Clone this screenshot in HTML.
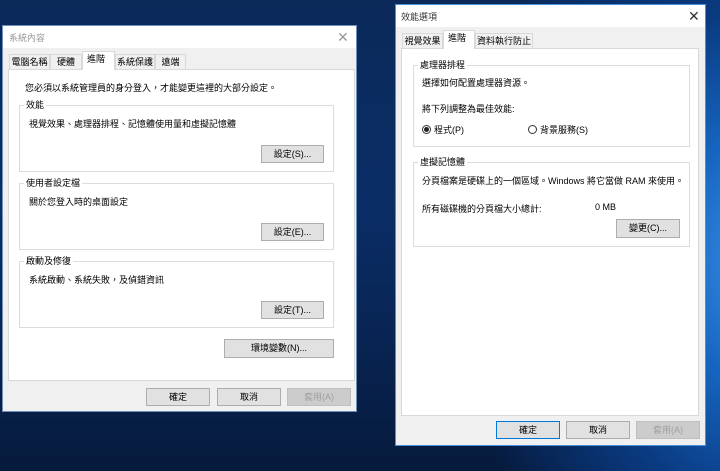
<!DOCTYPE html>
<html><head><meta charset="utf-8"><style>
*{margin:0;padding:0;box-sizing:border-box}
body{width:720px;height:471px;overflow:hidden;position:relative;font-family:"Liberation Sans","Noto Sans CJK TC",sans-serif;font-size:9px;color:#000;
background:radial-gradient(ellipse 300px 420px at 760px 260px,#3a8ee6 0%,#1565c0 30%,#0a3a80 60%,transparent 100%),linear-gradient(180deg,#0b2a5a 0%,#0a2d66 45%,#082350 75%,#061a3c 100%);}
.a{position:absolute;white-space:nowrap}
.win{position:absolute;background:#f0f0f0;border:1px solid #6e8fb8}
.title{position:absolute;left:0;top:0;right:0;height:22px;background:#fff}
.panel{position:absolute;background:#fff;border:1px solid #d9d9d9}
.grp{position:absolute;border:1px solid #dcdcdc}
.lbl{position:absolute;top:-7px;left:4px;background:#fff;padding:0 2px;line-height:12px}
.btn{position:absolute;background:#e1e1e1;border:1px solid #adadad;text-align:center;line-height:16px}
.dis{color:#a0a0a0;background:#cccccc;border-color:#bfbfbf}
.tab{position:absolute;background:#f0f0f0;border:1px solid #d9d9d9;border-bottom:none;line-height:14px;text-align:center}
.tab.sel{background:#fff;z-index:2}
.x{position:absolute;font-size:14px;color:#333;line-height:14px}
.radio{display:inline-block;width:9px;height:9px;border:1px solid #333;border-radius:50%;vertical-align:-1px;margin-right:3px;position:relative}
</style></head><body>

<div class="win" style="left:2px;top:25px;width:355px;height:387px">
 <div class="title"><span class="a" style="left:6px;top:5px;color:#999">系統內容</span><span class="x" style="left:334px;top:4px;color:#999">✕</span></div>
 <div class="tab" style="left:6px;top:28px;width:41px;height:15px">電腦名稱</div>
 <div class="tab" style="left:47px;top:28px;width:32px;height:15px">硬體</div>
 <div class="tab sel" style="left:79px;top:25px;width:33px;height:19px;text-align:left;padding-left:4px">進階</div>
 <div class="tab" style="left:112px;top:28px;width:40px;height:15px">系統保護</div>
 <div class="tab" style="left:152px;top:28px;width:31px;height:15px">遠端</div>
 <div class="panel" style="left:5px;top:43px;width:347px;height:312px">
  <span class="a" style="left:16px;top:11px">您必須以系統管理員的身分登入，才能變更這裡的大部分設定。</span>
  <div class="grp" style="left:10px;top:35px;width:315px;height:67px"><span class="lbl">效能</span>
   <span class="a" style="left:9px;top:11px">視覺效果、處理器排程、記憶體使用量和虛擬記憶體</span>
   <div class="btn" style="left:241px;top:39px;width:63px;height:18px">設定(S)...</div></div>
  <div class="grp" style="left:10px;top:113px;width:315px;height:67px"><span class="lbl">使用者設定檔</span>
   <span class="a" style="left:9px;top:11px">關於您登入時的桌面設定</span>
   <div class="btn" style="left:241px;top:39px;width:63px;height:18px">設定(E)...</div></div>
  <div class="grp" style="left:10px;top:191px;width:315px;height:67px"><span class="lbl">啟動及修復</span>
   <span class="a" style="left:9px;top:11px">系統啟動、系統失敗，及偵錯資訊</span>
   <div class="btn" style="left:241px;top:39px;width:63px;height:18px">設定(T)...</div></div>
  <div class="btn" style="left:215px;top:269px;width:110px;height:19px">環境變數(N)...</div>
 </div>
 <div class="btn" style="left:143px;top:362px;width:64px;height:18px">確定</div>
 <div class="btn" style="left:214px;top:362px;width:64px;height:18px">取消</div>
 <div class="btn dis" style="left:284px;top:362px;width:64px;height:18px">套用(A)</div>
</div>

<div class="win" style="left:395px;top:4px;width:311px;height:442px;border-color:#4a90d9">
 <div class="title"><span class="a" style="left:5px;top:5px;color:#333">效能選項</span><span class="x" style="left:292px;top:4px">✕</span></div>
 <div class="tab" style="left:6px;top:28px;width:41px;height:15px">視覺效果</div>
 <div class="tab sel" style="left:47px;top:25px;width:32px;height:19px;text-align:left;padding-left:4px">進階</div>
 <div class="tab" style="left:79px;top:28px;width:58px;height:15px">資料執行防止</div>
 <div class="panel" style="left:5px;top:43px;width:298px;height:368px">
  <div class="grp" style="left:11px;top:16px;width:277px;height:82px"><span class="lbl">處理器排程</span>
   <span class="a" style="left:8px;top:10px">選擇如何配置處理器資源。</span>
   <span class="a" style="left:8px;top:36px">將下列調整為最佳效能:</span>
   <span class="a" style="left:8px;top:57px"><span class="radio"><span style="position:absolute;left:1px;top:1px;width:5px;height:5px;border-radius:50%;background:#222"></span></span>程式(P)</span>
   <span class="a" style="left:114px;top:57px"><span class="radio"></span>背景服務(S)</span></div>
  <div class="grp" style="left:11px;top:113px;width:277px;height:85px"><span class="lbl">虛擬記憶體</span>
   <span class="a" style="left:8px;top:11px">分頁檔案是硬碟上的一個區域。Windows 將它當做 RAM 來使用。</span>
   <span class="a" style="left:8px;top:39px">所有磁碟機的分頁檔大小總計:</span>
   <span class="a" style="left:181px;top:39px">0 MB</span>
   <div class="btn" style="left:202px;top:56px;width:64px;height:19px">變更(C)...</div></div>
 </div>
 <div class="btn" style="left:100px;top:416px;width:64px;height:18px;border-color:#0078d7">確定</div>
 <div class="btn" style="left:170px;top:416px;width:64px;height:18px">取消</div>
 <div class="btn dis" style="left:240px;top:416px;width:64px;height:18px">套用(A)</div>
</div>
</body></html>
